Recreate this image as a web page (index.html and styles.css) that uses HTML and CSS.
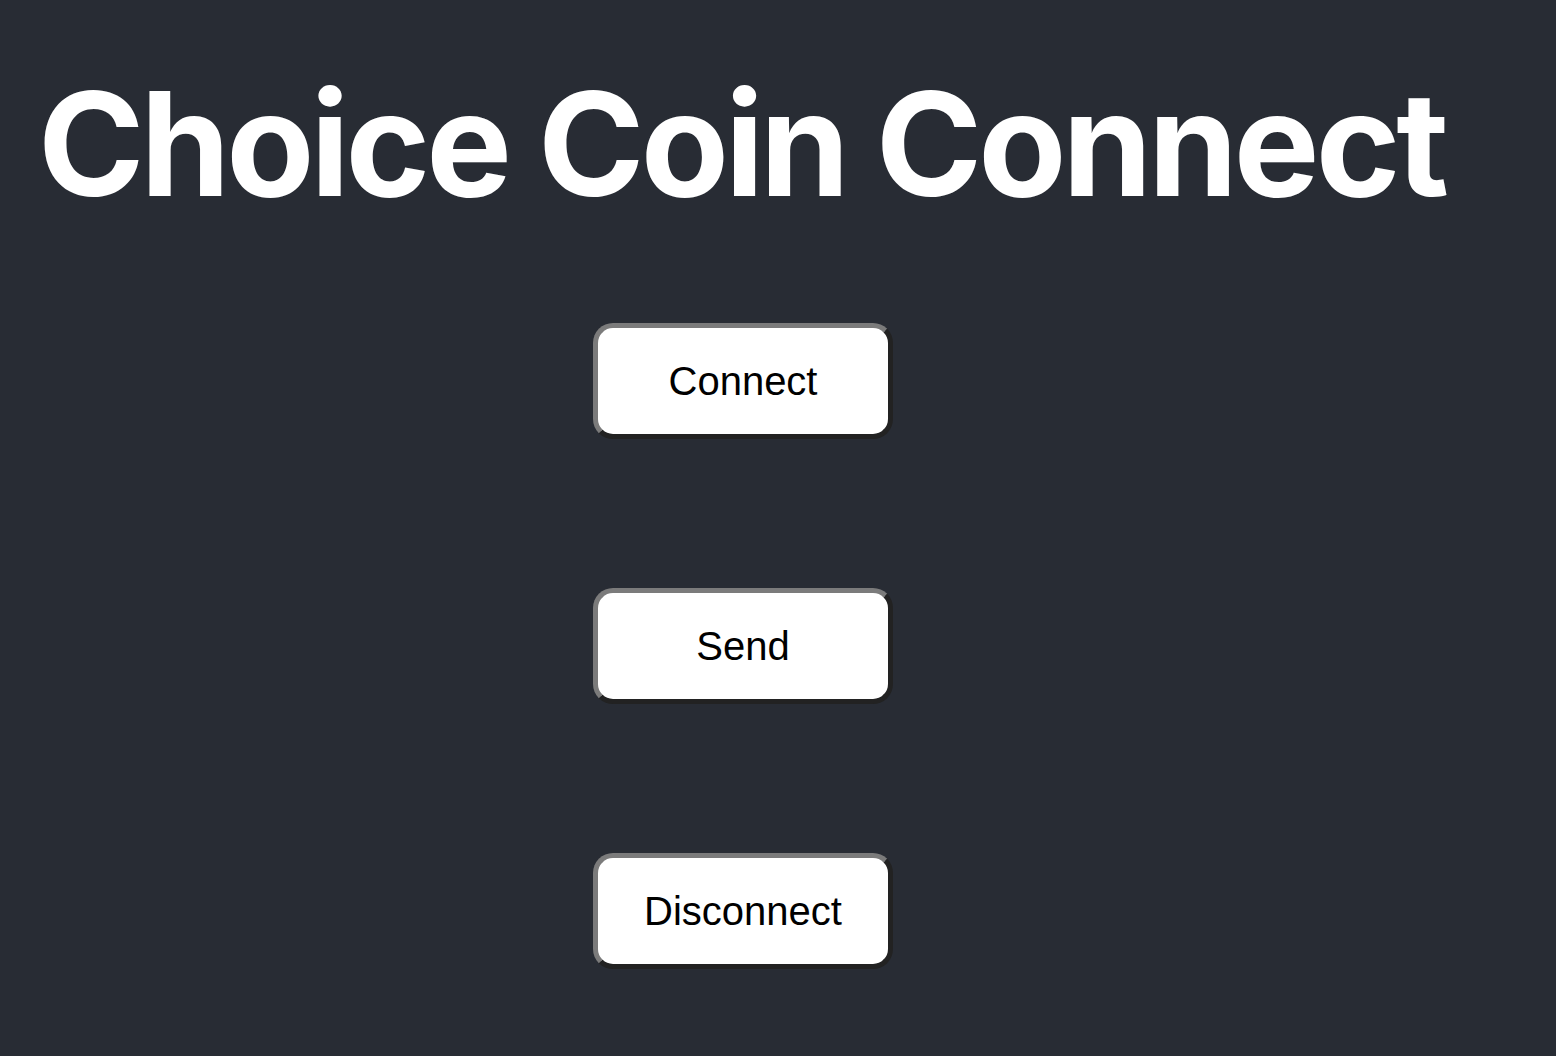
FILE: index.html
```html
<!DOCTYPE html>
<html>
<head>
<meta charset="utf-8">
<link rel="stylesheet" href="styles.css">
</head>
<body>
<div class="app">
  <h1 class="title">Choice Coin Connect</h1>
  <div class="actions">
    <button class="btn">Connect</button>
    <button class="btn">Send</button>
    <button class="btn">Disconnect</button>
  </div>
</div>
</body>
</html>
```
FILE: styles.css
```css
html, body {
  margin: 0;
  padding: 0;
  background: #282c34;
  height: 100%;
}
.app {
  min-height: 100vh;
  background: #282c34;
}
.title {
  margin: 0;
  padding: 64px 0 0 38px;
  font-family: Inter, "Liberation Sans", sans-serif;
  font-weight: 700;
  font-size: 144px;
  line-height: 160px;
  letter-spacing: -4px;
  color: #ffffff;
}
.actions {
  width: 1486px;
  display: flex;
  flex-direction: column;
  align-items: center;
  gap: 149px;
  padding-top: 99px;
}
.btn {
  width: 300px;
  height: 116px;
  box-sizing: border-box;
  background: #ffffff;
  color: #000000;
  font-family: "Liberation Sans", Arial, sans-serif;
  font-size: 40px;
  border-style: solid;
  border-width: 5px;
  border-color: #7b7b7b #222222 #222222 #7b7b7b;
  border-radius: 20px;
  padding: 0;
}
```
